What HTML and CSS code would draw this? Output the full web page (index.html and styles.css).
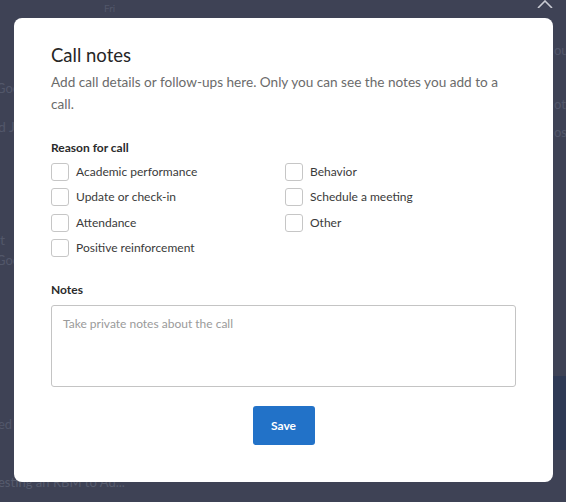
FILE: index.html
```html
<!DOCTYPE html>
<html>
<head>
<meta charset="utf-8">
<link rel="stylesheet" href="styles.css">
</head>
<body>
<div class="page">
  <div class="backdrop">
    <span class="bg-text t1">Fri</span>
    <span class="bg-text t2">Goo</span>
    <span class="bg-text t3">Goo</span>
    <span class="bg-text t4">d J</span>
    <span class="bg-text t5">t</span>
    <span class="bg-text t6">ed</span>
    <span class="bg-text t7">esting an RBM to Ad...</span>
    <span class="bg-text t8">ou</span>
    <span class="bg-text t9">ot</span>
    <span class="bg-text t10">os</span>
    <div class="bg-panel"></div>
    <svg class="close" width="18" height="10" viewBox="0 0 18 10"><path d="M2 10 L9 3 L16 10" fill="none" stroke="#c9cbd3" stroke-width="1.6"/></svg>
  </div>
  <div class="modal">
    <h1 class="title">Call notes</h1>
    <p class="subtitle">Add call details or follow-ups here. Only you can see the notes you add to a call.</p>
    <div class="section-label">Reason for call</div>
    <div class="reasons">
      <label class="check"><span class="box"></span>Academic performance</label>
      <label class="check"><span class="box"></span>Behavior</label>
      <label class="check"><span class="box"></span>Update or check-in</label>
      <label class="check"><span class="box"></span>Schedule a meeting</label>
      <label class="check"><span class="box"></span>Attendance</label>
      <label class="check"><span class="box"></span>Other</label>
      <label class="check"><span class="box"></span>Positive reinforcement</label>
    </div>
    <div class="section-label notes-label">Notes</div>
    <div class="textarea">Take private notes about the call</div>
    <div class="actions"><button class="save">Save</button></div>
  </div>
</div>
</body>
</html>
```
FILE: styles.css
```css
html, body {
  margin: 0;
  padding: 0;
}
body {
  width: 566px;
  height: 502px;
  overflow: hidden;
  background: #3e4255;
  font-family: "Lato", "Open Sans", sans-serif;
}
.page {
  position: relative;
  width: 566px;
  height: 502px;
}
.backdrop {
  position: absolute;
  inset: 0;
}
.bg-text {
  position: absolute;
  color: #52576a;
  font-size: 13px;
}
.t1 { left: 104px; top: 2px; font-size: 10px; }
.t2 { left: -4px; top: 80px; }
.t3 { left: -4px; top: 252px; }
.t4 { left: -2px; top: 118px; font-size: 14px; }
.t5 { left: 0; top: 231px; font-size: 14px; }
.t6 { left: -2px; top: 416px; }
.t7 { left: -2px; top: 474px; font-size: 13px; color: #575c6e; }
.t8 { left: 554px; top: 42px; }
.t9 { left: 554px; top: 96px; }
.t10 { left: 554px; top: 124px; }
.bg-panel {
  position: absolute;
  left: 553px;
  top: 376px;
  width: 13px;
  height: 74px;
  background: #2f3a55;
}
.close {
  position: absolute;
  left: 536px;
  top: -2px;
}
.modal {
  position: absolute;
  left: 14px;
  top: 18px;
  width: 539px;
  height: 464px;
  box-sizing: border-box;
  background: #fff;
  border-radius: 8px;
  padding: 25px 37px 0 37px;
  color: #2b2b2b;
}
.title {
  margin: 0;
  font-size: 18.5px;
  font-weight: 400;
  line-height: 24px;
  color: #262626;
}
.subtitle {
  margin: 4px 0 0 0;
  font-size: 13.6px;
  line-height: 22px;
  color: #6b6b6b;
}
.section-label {
  font-size: 12px;
  font-weight: 700;
  color: #2b2b2b;
  line-height: 16px;
  margin-top: 25px;
}
.reasons {
  display: grid;
  grid-template-columns: 234px 1fr;
  row-gap: 7.4px;
  margin-top: 7px;
}
.check {
  display: flex;
  align-items: center;
  gap: 7px;
  font-size: 12px;
  color: #3a3a3a;
  line-height: 18px;
}
.box {
  width: 16px;
  height: 16px;
  border: 1px solid #c6c6c6;
  border-radius: 3px;
  flex: none;
}
.notes-label {
  margin-top: 25px;
}
.textarea {
  margin-top: 7px;
  border: 1px solid #c4c4c4;
  border-radius: 3px;
  padding: 10px 11px;
  box-sizing: border-box;
  height: 82px;
  font-size: 12px;
  color: #9a9a9a;
}
.actions {
  display: flex;
  justify-content: center;
  margin-top: 19px;
}
.save {
  width: 62px;
  height: 39px;
  border: none;
  border-radius: 3px;
  background: #2272c8;
  color: #fff;
  font-family: "Lato", "Open Sans", sans-serif;
  font-weight: 700;
  font-size: 12px;
  padding: 0;
}
```
